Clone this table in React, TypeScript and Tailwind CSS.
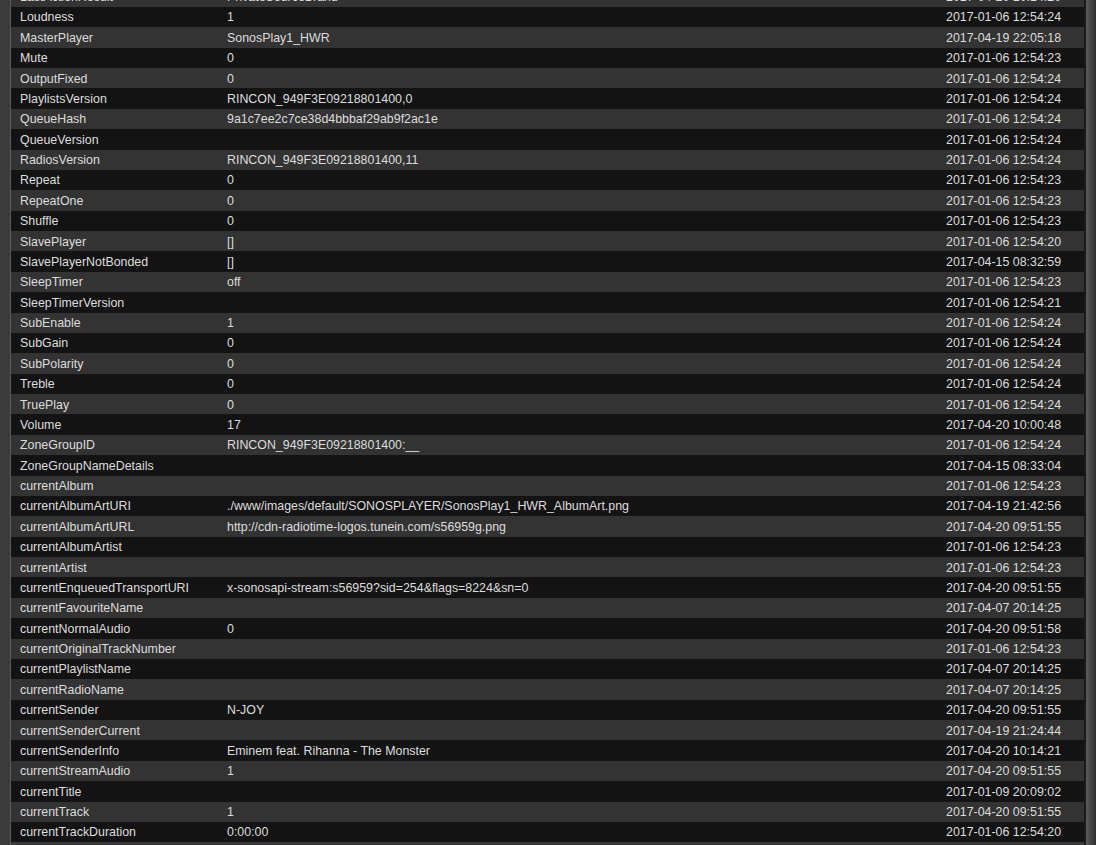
import React from "react";

const rows: [string, string, string][] = [
  ["LastActionResult", "PrivateSourceBrand", "2017-04-20 10:14:20"],
  ["Loudness", "1", "2017-01-06 12:54:24"],
  ["MasterPlayer", "SonosPlay1_HWR", "2017-04-19 22:05:18"],
  ["Mute", "0", "2017-01-06 12:54:23"],
  ["OutputFixed", "0", "2017-01-06 12:54:24"],
  ["PlaylistsVersion", "RINCON_949F3E09218801400,0", "2017-01-06 12:54:24"],
  ["QueueHash", "9a1c7ee2c7ce38d4bbbaf29ab9f2ac1e", "2017-01-06 12:54:24"],
  ["QueueVersion", "", "2017-01-06 12:54:24"],
  ["RadiosVersion", "RINCON_949F3E09218801400,11", "2017-01-06 12:54:24"],
  ["Repeat", "0", "2017-01-06 12:54:23"],
  ["RepeatOne", "0", "2017-01-06 12:54:23"],
  ["Shuffle", "0", "2017-01-06 12:54:23"],
  ["SlavePlayer", "[]", "2017-01-06 12:54:20"],
  ["SlavePlayerNotBonded", "[]", "2017-04-15 08:32:59"],
  ["SleepTimer", "off", "2017-01-06 12:54:23"],
  ["SleepTimerVersion", "", "2017-01-06 12:54:21"],
  ["SubEnable", "1", "2017-01-06 12:54:24"],
  ["SubGain", "0", "2017-01-06 12:54:24"],
  ["SubPolarity", "0", "2017-01-06 12:54:24"],
  ["Treble", "0", "2017-01-06 12:54:24"],
  ["TruePlay", "0", "2017-01-06 12:54:24"],
  ["Volume", "17", "2017-04-20 10:00:48"],
  ["ZoneGroupID", "RINCON_949F3E09218801400:__", "2017-01-06 12:54:24"],
  ["ZoneGroupNameDetails", "", "2017-04-15 08:33:04"],
  ["currentAlbum", "", "2017-01-06 12:54:23"],
  ["currentAlbumArtURI", "./www/images/default/SONOSPLAYER/SonosPlay1_HWR_AlbumArt.png", "2017-04-19 21:42:56"],
  ["currentAlbumArtURL", "http://cdn-radiotime-logos.tunein.com/s56959g.png", "2017-04-20 09:51:55"],
  ["currentAlbumArtist", "", "2017-01-06 12:54:23"],
  ["currentArtist", "", "2017-01-06 12:54:23"],
  ["currentEnqueuedTransportURI", "x-sonosapi-stream:s56959?sid=254&flags=8224&sn=0", "2017-04-20 09:51:55"],
  ["currentFavouriteName", "", "2017-04-07 20:14:25"],
  ["currentNormalAudio", "0", "2017-04-20 09:51:58"],
  ["currentOriginalTrackNumber", "", "2017-01-06 12:54:23"],
  ["currentPlaylistName", "", "2017-04-07 20:14:25"],
  ["currentRadioName", "", "2017-04-07 20:14:25"],
  ["currentSender", "N-JOY", "2017-04-20 09:51:55"],
  ["currentSenderCurrent", "", "2017-04-19 21:24:44"],
  ["currentSenderInfo", "Eminem feat. Rihanna - The Monster", "2017-04-20 10:14:21"],
  ["currentStreamAudio", "1", "2017-04-20 09:51:55"],
  ["currentTitle", "", "2017-01-09 20:09:02"],
  ["currentTrack", "1", "2017-04-20 09:51:55"],
  ["currentTrackDuration", "0:00:00", "2017-01-06 12:54:20"],
];

export default function App() {
  return (
    <div
      className="flex h-[845px] w-[1096px] overflow-hidden bg-[#3b3b3b] text-[12.4px] text-[#dddddd]"
      style={{ fontFamily: '"Liberation Sans", Arial, sans-serif' }}
    >
      <div className="w-[10px] shrink-0" />
      <div className="w-px shrink-0 bg-[#5a5a5a]" />
      <div className="w-[1073px] shrink-0 -mt-[13.4px] flex flex-col">
        {rows.map(([name, value, date], i) => (
          <div
            key={name}
            className={`flex h-[20.375px] shrink-0 items-center leading-none pt-px ${
              i % 2 === 0 ? "bg-[#333333]" : "bg-[#131313]"
            }`}
          >
            <div className="w-[207px] shrink-0 pl-[9px] whitespace-nowrap">{name}</div>
            <div className="w-[719px] shrink-0 pl-[9px] whitespace-nowrap">{value}</div>
            <div className="flex-1 pl-[9px] whitespace-nowrap">{date}</div>
          </div>
        ))}
      </div>
      <div className="w-[2px] shrink-0 bg-[#1a1a1a]" />
      <div className="w-[10px] shrink-0 bg-gradient-to-r from-[#5c5c5c] to-[#2e2e2e]" />
    </div>
  );
}
